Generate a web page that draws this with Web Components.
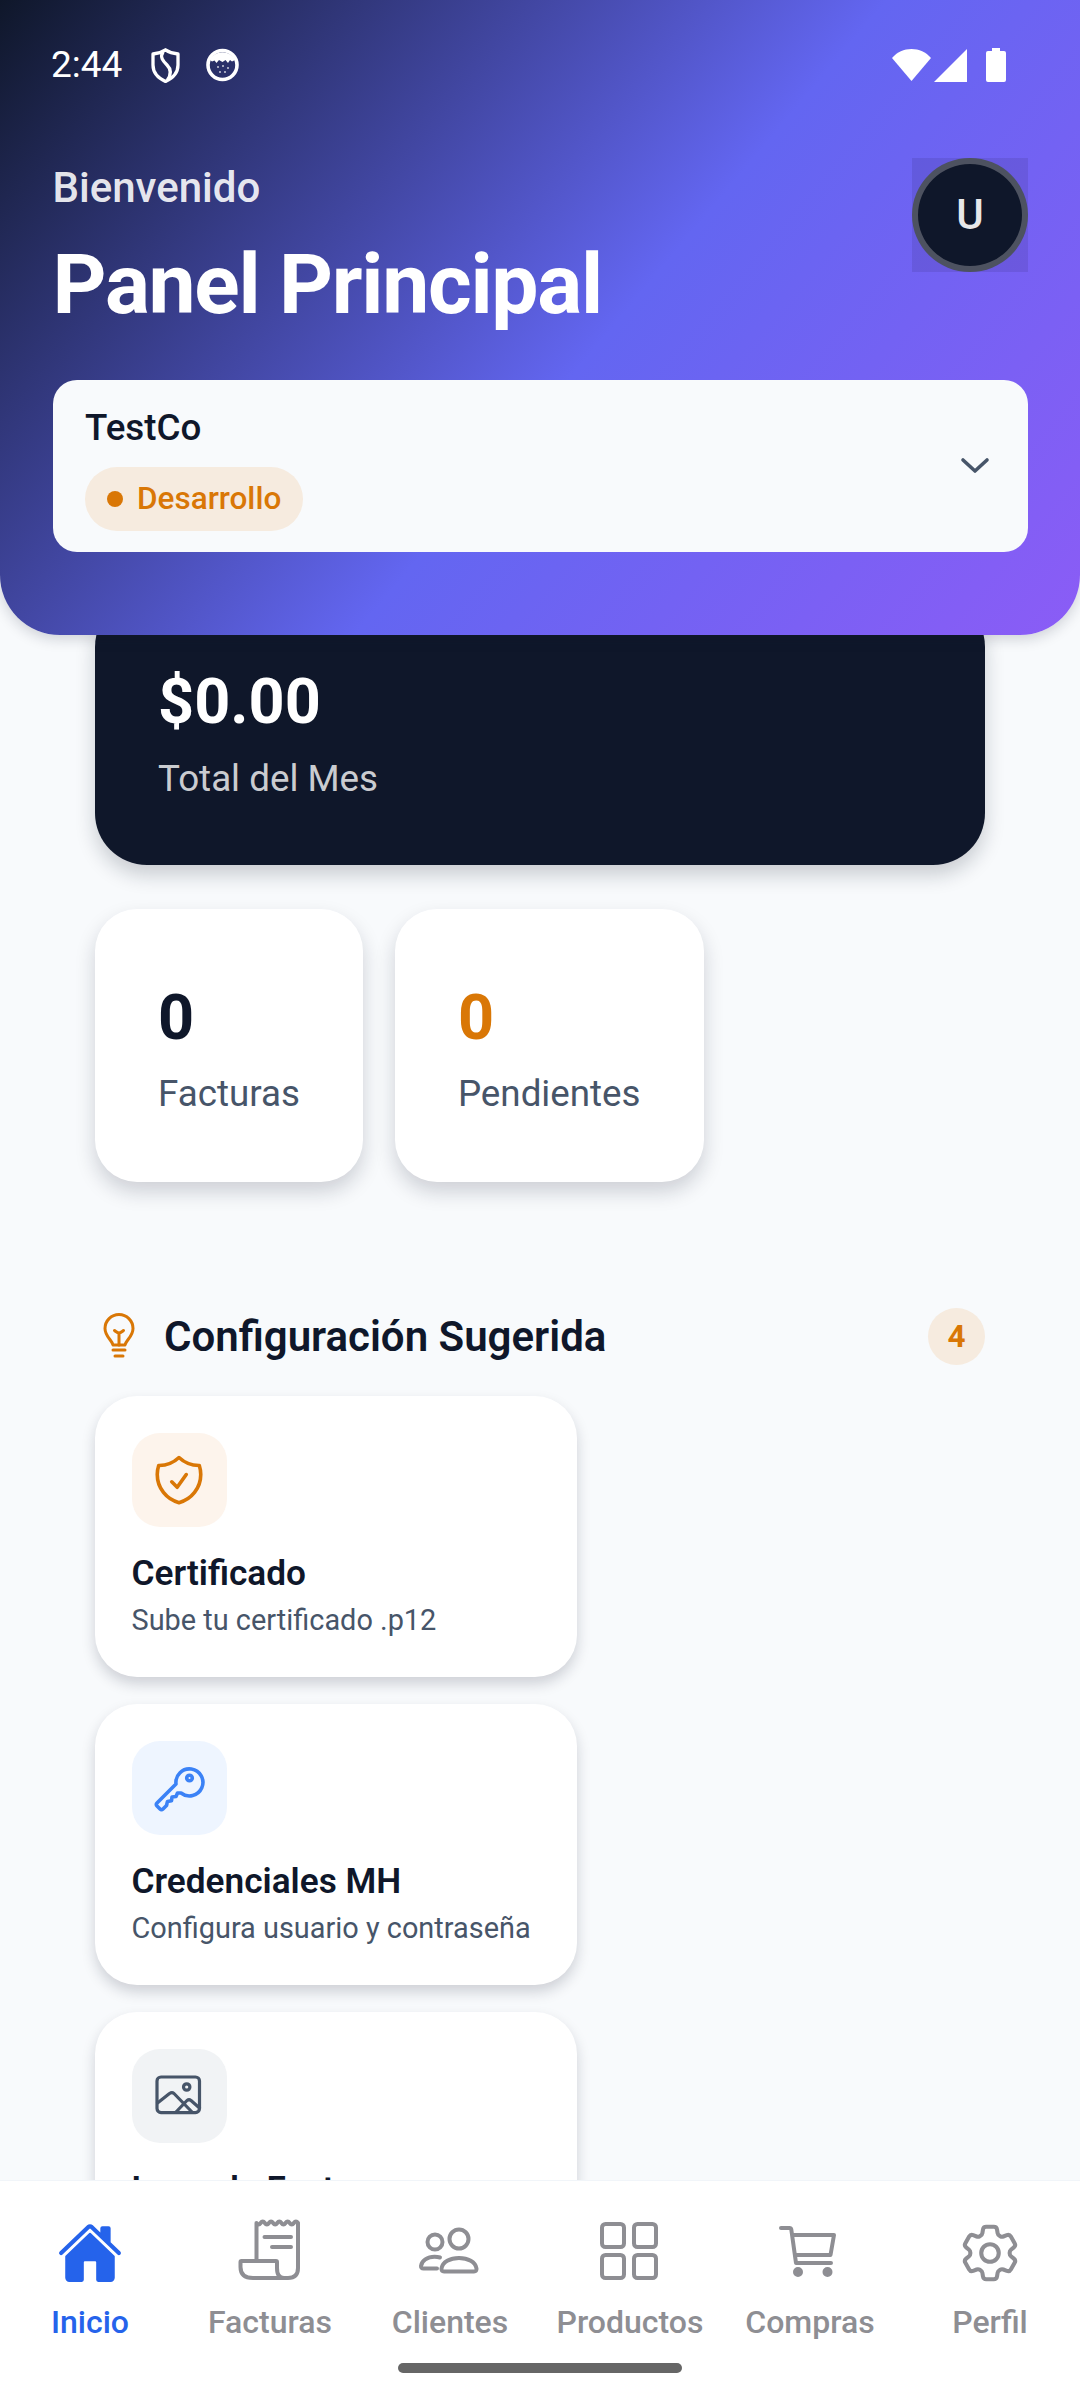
<!DOCTYPE html>
<html lang="es">
<head>
<meta charset="utf-8">
<title>Panel Principal</title>
<style>
    html, body { margin: 0; padding: 0; background: #f8fafc; }
    body { font-family: Roboto, "Noto Sans", sans-serif; }
    svg { display: block; }
</style>
</head>
<body>
<app-shell>
    <app-header slot="header" title="Panel Principal" greeting="Bienvenido" initial="U">
        <company-select name="TestCo" env="Desarrollo"></company-select>
    </app-header>

    <hero-card amount="$0.00" caption="Total del Mes"></hero-card>

    <div class="stats" style="display:flex;gap:32px;margin-top:44px">
        <stat-card value="0" label="Facturas"></stat-card>
        <stat-card value="0" label="Pendientes" accent></stat-card>
    </div>

    <section-head count="4">Configuración Sugerida</section-head>

    <div style="display:flex;flex-direction:column;gap:27px;margin-top:31px">
        <config-card heading="Certificado" text="Sube tu certificado .p12" bg="#fdf4ec" color="#d97706">
            <svg width="58" height="58" viewBox="0 0 24 24" fill="none" stroke="#d97706" stroke-width="1.5" stroke-linecap="round" stroke-linejoin="round"><path d="M9 12.75 11.25 15 15 9.75m-3-7.036A11.959 11.959 0 0 1 3.598 6 11.99 11.99 0 0 0 3 9.749c0 5.592 3.824 10.29 9 11.623 5.176-1.332 9-6.03 9-11.622 0-1.31-.21-2.571-.598-3.751h-.152c-3.196 0-6.1-1.248-8.25-3.285Z"/></svg>
        </config-card>
        <config-card heading="Credenciales MH" text="Configura usuario y contraseña" bg="#eef5ff">
            <svg width="58" height="58" viewBox="0 0 58 58" fill="none" stroke="#3b82f6" stroke-width="3.6" stroke-linecap="round" stroke-linejoin="round"><path d="M26 25 7 44q-1.500 1.500 0 3l3 3q1.500 1.500 3 0l3.500-3.500 1-4 4-.8.500-3.700 4-.5 1.500-3.500h3.500A13.500 13.500 0 1 0 26 25Z"/><circle cx="39.500" cy="19" r="2.800"/></svg>
        </config-card>
        <config-card heading="Logo de Factura" text="Sube el logo de tu empresa" bg="#f1f3f5">
            <svg width="58" height="58" viewBox="0 0 58 58" fill="none" stroke="#475569" stroke-width="3.2" stroke-linecap="round" stroke-linejoin="round"><rect x="7" y="10" width="42.500" height="35.600" rx="4"/><path d="M7.500 36 19.500 26.500q2.500-1.500 4.500 0L42 45M26 45 37 33.500q2-1.500 4 0L49.500 41"/><circle cx="36.700" cy="20" r="3.200"/></svg>
        </config-card>
    </div>

    <bottom-nav slot="nav"></bottom-nav>
</app-shell>

<script>
class AppShell extends HTMLElement
{
    constructor()
    {
        super();
        this.attachShadow({mode: "open"});
        this.shadowRoot.innerHTML = `
        <style>
            :host{
                display: flex;
                flex-direction: column;
                width: 1080px;
                height: 2400px;
                overflow: hidden;
                background: #f8fafc;
                color: #0f172a;
                font-family: Roboto, "Noto Sans", sans-serif;
            }
            .scroll{
                flex: 1;
                min-height: 0;
                overflow: hidden;
                padding: 0 95px;
            }
        </style>
        <slot name="header"></slot>
        <main class="scroll"><slot></slot></main>
        <slot name="nav"></slot>
        `;
    }
}

class StatusBar extends HTMLElement
{
    constructor()
    {
        super();
        this.attachShadow({mode: "open"});
        this.shadowRoot.innerHTML = `
        <style>
            :host{
                display: flex;
                align-items: center;
                height: 36px;
                color: #fff;
            }
            .time{
                font: 400 37px/36px Roboto, sans-serif;
                width: 74px;
            }
            .left{ display: flex; align-items: center; gap: 26px; flex: 1; }
            .right{ display: flex; align-items: center; gap: 3px; padding-right: 22px; }
            .batt{ margin-left: 16px; }
        </style>
        <div class="left">
            <span class="time">2:44</span>
            <svg width="29" height="35" viewBox="0 0 29 35" fill="none" stroke="#fff" stroke-width="3.300" stroke-linejoin="round"><path d="M14.500 1.800C10.500 4.500 6.500 5.500 2 6V17C2 25 8 30.500 14.500 33.500 21 30.500 27 25 27 17V6C22.500 5.500 18.500 4.500 14.500 1.800Z"/><path d="M12 4C8.500 9 12 13 16 17 20 21 20.500 26 16.500 32"/></svg>
            <svg width="33" height="34" viewBox="0 0 33 34"><circle cx="16.500" cy="17" r="14.500" fill="none" stroke="#fff" stroke-width="3.600"/><path d="M4 12A14 14 0 0 1 29 12L26 13.500 24 12 22 15 19.500 12 16.500 14 13 12 10.500 15 8.500 12.500 6 13.500Z" fill="#fff"/><g fill="#fff" opacity=".75"><circle cx="12" cy="19" r="1"/><circle cx="17" cy="18" r="1"/><circle cx="22" cy="20" r="1"/><circle cx="14" cy="24" r="1"/><circle cx="19" cy="24" r="1"/></g></svg>
        </div>
        <div class="right">
            <svg width="39" height="32" viewBox="0 0 39 32" fill="#fff"><path d="M0 9C5 3 12 0 19.500 0 27 0 34 3 39 9L19.500 32Z"/></svg>
            <svg width="33" height="33" viewBox="0 0 33 33" fill="#fff"><path d="M33 0V33H0Z"/></svg>
            <svg class="batt" width="20" height="34" viewBox="0 0 20 34" fill="#fff"><path d="M6 0h8v3h4q2 0 2 2v27q0 2-2 2H2q-2 0-2-2V5q0-2 2-2h4Z"/></svg>
        </div>
        `;
    }
}

class AppHeader extends HTMLElement
{
    constructor()
    {
        super();
        this.attachShadow({mode: "open"});
    }

    connectedCallback()
    {
        const title = this.getAttribute("title");
        const greeting = this.getAttribute("greeting");
        const initial = this.getAttribute("initial");
        this.shadowRoot.innerHTML = `
        <style>
            :host{
                display: block;
                position: relative;
                z-index: 2;
                box-sizing: border-box;
                height: 635px;
                flex: none;
                padding: 47px 52px 0 51px;
                border-radius: 0 0 60px 60px;
                background: linear-gradient(130deg, #0f172a 0%, #6366f1 55%, #8b5cf6 100%);
                box-shadow: 0 4px 14px rgba(15,23,42,.18);
            }
            .top{
                display: flex;
                justify-content: space-between;
                align-items: flex-start;
                margin: 75px 0 0 1.500px;
            }
            .greet{
                font: 500 42px/44px Roboto, sans-serif;
                color: rgba(255,255,255,.9);
                margin-top: 8px;
            }
            h1{
                margin: 27px 0 0;
                font: 700 84px/96px Roboto, sans-serif;
                letter-spacing: -1.300px;
                color: #fff;
            }
            .avatar-box{
                width: 116px;
                height: 114px;
                background: rgba(30,27,75,.12);
                flex: none;
            }
            .avatar{
                box-sizing: border-box;
                width: 100%;
                height: 100%;
                border-radius: 50%;
                border: 6px solid #4d5260;
                background: #0f172a;
                color: #e8e8ea;
                font: 500 42px/102px Roboto, sans-serif;
                text-align: center;
            }
            ::slotted(company-select){
                margin: 47px 0 0 2px;
            }
        </style>
        <status-bar></status-bar>
        <div class="top">
            <div>
                <div class="greet">${greeting}</div>
                <h1>${title}</h1>
            </div>
            <div class="avatar-box"><div class="avatar">${initial}</div></div>
        </div>
        <slot></slot>
        `;
    }
}

class CompanySelect extends HTMLElement
{
    constructor()
    {
        super();
        this.attachShadow({mode: "open"});
    }

    connectedCallback()
    {
        this.shadowRoot.innerHTML = `
        <style>
            :host{
                display: flex;
                align-items: center;
                justify-content: space-between;
                box-sizing: border-box;
                width: 975px;
                height: 172px;
                padding: 27px 38px 21px 32px;
                border-radius: 24px;
                background: #f8fafc;
            }
            .name{
                font: 500 36.750px/42px Roboto, sans-serif;
                color: #0f172a;
            }
            .chip{
                display: inline-flex;
                align-items: center;
                gap: 14px;
                height: 64px;
                margin-top: 18px;
                padding: 0 22px;
                border-radius: 32px;
                background: #f6ebdf;
                color: #d97706;
                font: 500 31.500px/64px Roboto, sans-serif;
            }
            .dot{ width: 16px; height: 16px; border-radius: 50%; background: #d97706; }
            svg{ margin-bottom: 7px; }
        </style>
        <div>
            <div class="name">${this.getAttribute("name")}</div>
            <div class="chip"><span class="dot"></span>${this.getAttribute("env")}</div>
        </div>
        <svg width="30" height="20" viewBox="0 0 30 20" fill="none" stroke="#475569" stroke-width="3.600" stroke-linecap="round" stroke-linejoin="round"><path d="M3 4 15 15 27 4"/></svg>
        `;
    }
}

class HeroCard extends HTMLElement
{
    constructor()
    {
        super();
        this.attachShadow({mode: "open"});
    }

    connectedCallback()
    {
        this.shadowRoot.innerHTML = `
        <style>
            :host{
                display: block;
                box-sizing: border-box;
                height: 270px;
                margin-top: -40px;
                padding: 69.500px 63px 0;
                border-radius: 52px;
                background: #0f172a;
                color: #fff;
                box-shadow: 0 10px 20px rgba(15,23,42,.2);
            }
            .amount{ font: 700 63px/74px Roboto, sans-serif; }
            .cap{
                margin-top: 20px;
                font: 400 36.750px/40px Roboto, sans-serif;
                color: rgba(255,255,255,.8);
            }
        </style>
        <div class="amount">${this.getAttribute("amount")}</div>
        <div class="cap">${this.getAttribute("caption")}</div>
        `;
    }
}

class StatCard extends HTMLElement
{
    constructor()
    {
        super();
        this.attachShadow({mode: "open"});
    }

    connectedCallback()
    {
        this.shadowRoot.innerHTML = `
        <style>
            :host{
                display: block;
                box-sizing: border-box;
                height: 273px;
                padding: 71.500px 63px 0;
                border-radius: 42px;
                background: #fff;
                box-shadow: 0 10px 20px rgba(15,23,42,.18);
            }
            .val{ font: 700 63px/74px Roboto, sans-serif; color: #0f172a; }
            :host([accent]) .val{ color: #d97706; }
            .lab{
                margin-top: 17px;
                font: 400 36.750px/44px Roboto, sans-serif;
                color: #475569;
            }
        </style>
        <div class="val">${this.getAttribute("value")}</div>
        <div class="lab">${this.getAttribute("label")}</div>
        `;
    }
}

class SectionHead extends HTMLElement
{
    constructor()
    {
        super();
        this.attachShadow({mode: "open"});
    }

    connectedCallback()
    {
        this.shadowRoot.innerHTML = `
        <style>
            :host{
                display: flex;
                align-items: center;
                height: 57px;
                margin-top: 126px;
            }
            svg{ margin-right: 21px; }
            .title{
                flex: 1;
                font: 600 42px/57px Roboto, sans-serif;
                color: #0f172a;
            }
            .count{
                width: 57px;
                height: 57px;
                border-radius: 50%;
                background: #f6ebdf;
                color: #d97706;
                text-align: center;
                font: 700 31.500px/57px Roboto, sans-serif;
            }
        </style>
        <svg width="48" height="48" viewBox="0 0 48 48" fill="none" stroke="#d97706" stroke-width="3" stroke-linecap="round" stroke-linejoin="round"><path d="M18 32C17 27 10 23.500 10 15.500A14 14 0 0 1 38 15.500C38 23.500 31 27 30 32Z"/><path d="M24 32V20M19.500 17.500c2 1.500 3 2.500 4.500 2.500s2.500-1 4.500-2.500M18 37H30M20 43H28" /></svg>
        <div class="title"><slot></slot></div>
        <div class="count">${this.getAttribute("count")}</div>
        `;
    }
}

class ConfigCard extends HTMLElement
{
    constructor()
    {
        super();
        this.attachShadow({mode: "open"});
    }

    connectedCallback()
    {
        this.shadowRoot.innerHTML = `
        <style>
            :host{
                display: block;
                box-sizing: border-box;
                width: 482px;
                height: 281px;
                padding: 37px 36.500px;
                border-radius: 42px;
                background: #fff;
                box-shadow: 0 7px 14px rgba(15,23,42,.18);
            }
            .ico{
                display: flex;
                align-items: center;
                justify-content: center;
                width: 95px;
                height: 94px;
                border-radius: 28px;
                background: ${this.getAttribute("bg")};
            }
            .h{
                margin-top: 24px;
                font: 600 35.200px/44px Roboto, sans-serif;
                color: #0f172a;
                white-space: nowrap;
            }
            .t{
                margin-top: 5px;
                font: 400 28.900px/40px Roboto, sans-serif;
                color: #475569;
                white-space: nowrap;
            }
        </style>
        <div class="ico"><slot></slot></div>
        <div class="h">${this.getAttribute("heading")}</div>
        <div class="t">${this.getAttribute("text")}</div>
        `;
    }
}

const NAV_ITEMS = [
    {label: "Inicio", active: true, icon: `<svg width="66" height="66" viewBox="0 0 512 512" fill="#2563eb"><path d="M261.560 101.280a8 8 0 00-11.060 0L66.400 277.150a8 8 0 00-2.470 5.790L63.900 448a32 32 0 0032 32H192a16 16 0 0016-16V328a8 8 0 018-8h80a8 8 0 018 8v136a16 16 0 0016 16h96.060a32 32 0 0032-32V282.940a8 8 0 00-2.470-5.790z"/><path d="M490.910 244.150l-74.800-71.560V64a16 16 0 00-16-16h-48a16 16 0 00-16 16v32l-57.920-55.380C272.770 35.140 264.710 32 256 32c-8.680 0-16.720 3.140-22.140 8.630l-212.700 203.500c-6.220 6-7 15.870-1.340 22.370A16 16 0 0043 267.560L250.500 69.280a8 8 0 0111.060 0l207.520 198.280a16 16 0 0022.590-.44c6.140-6.360 5.630-16.860-.76-22.970z"/></svg>`},
    {label: "Facturas", icon: `<svg width="72" height="72" viewBox="0 0 72 72" fill="none" stroke="currentColor" stroke-width="4" stroke-linecap="round" stroke-linejoin="round"><path d="M22.500 43V6q2.075 3 4.150 0t4.150 0 4.150 0 4.150 0 4.150 0 4.150 0 4.150 0 4.150 0 4.150 0 4.150 0V51q0 10-10 10H19Q6.500 61 6.500 50V45q0-1 1-1H42q1 0 1 1v6q0 10 7 10"/><path d="M30.500 20H57M38 30H57"/></svg>`},
    {label: "Clientes", icon: `<svg width="72" height="72" viewBox="0 0 72 72" fill="none" stroke="currentColor" stroke-width="4" stroke-linecap="round" stroke-linejoin="round"><circle cx="21" cy="25" r="7.500"/><circle cx="45" cy="22" r="9.500"/><path d="M27.500 51.500C28.500 45 36 41 45 41s16.500 4 17.500 10.500q.3 3-2.500 3H30q-2.800 0-2.500-3Z"/><path d="M26 40.500q-2.500-.8-5.500-.8C13.500 39.700 7.500 44 7 49q-.2 2.500 2.500 2.500H23"/></svg>`},
    {label: "Productos", icon: `<svg width="72" height="72" viewBox="0 0 72 72" fill="none" stroke="currentColor" stroke-width="4" stroke-linecap="round" stroke-linejoin="round"><rect x="8" y="7" width="22" height="23" rx="3.500"/><rect x="40" y="7" width="22" height="23" rx="3.500"/><rect x="8" y="38" width="22" height="23" rx="3.500"/><rect x="40" y="38" width="22" height="23" rx="3.500"/></svg>`},
    {label: "Compras", icon: `<svg width="72" height="72" viewBox="0 0 72 72" fill="none" stroke="currentColor" stroke-width="4" stroke-linecap="round" stroke-linejoin="round"><path d="M7 11H15.500q1.500 0 1.800 1.500L22 46H57M18.500 18H60L56.500 38H21"/><circle cx="24" cy="55" r="3" fill="currentColor"/><circle cx="53.500" cy="55" r="3" fill="currentColor"/></svg>`},
    {label: "Perfil", icon: `<svg width="70" height="70" viewBox="0 0 24 24" fill="none" stroke="currentColor" stroke-width="1.400" stroke-linecap="round" stroke-linejoin="round"><path d="M9.594 3.940c.090-.542.560-.940 1.110-.940h2.593c.550 0 1.020.398 1.110.940l.213 1.281c.063.374.313.686.645.870.074.040.147.083.220.127.325.196.720.257 1.075.124l1.217-.456a1.125 1.125 0 0 1 1.370.490l1.296 2.247a1.125 1.125 0 0 1-.260 1.431l-1.003.827c-.293.241-.438.613-.430.992a7.723 7.723 0 0 1 0 .255c-.008.378.137.750.430.991l1.004.827c.424.350.534.955.260 1.430l-1.298 2.247a1.125 1.125 0 0 1-1.369.491l-1.217-.456c-.355-.133-.750-.072-1.076.124a6.470 6.470 0 0 1-.220.128c-.331.183-.581.495-.644.869l-.213 1.281c-.090.543-.560.940-1.110.940h-2.594c-.550 0-1.019-.398-1.110-.940l-.213-1.281c-.062-.374-.312-.686-.644-.870a6.520 6.520 0 0 1-.220-.127c-.325-.196-.720-.257-1.076-.124l-1.217.456a1.125 1.125 0 0 1-1.369-.490l-1.297-2.247a1.125 1.125 0 0 1 .260-1.431l1.004-.827c.292-.240.437-.613.430-.991a6.932 6.932 0 0 1 0-.255c.007-.380-.138-.751-.430-.992l-1.004-.827a1.125 1.125 0 0 1-.260-1.430l1.297-2.247a1.125 1.125 0 0 1 1.370-.491l1.216.456c.356.133.751.072 1.076-.124.072-.044.146-.086.220-.128.332-.183.582-.495.644-.869l.214-1.280Z"/><path d="M15 12a3 3 0 1 1-6 0 3 3 0 0 1 6 0Z"/></svg>`}
];

class BottomNav extends HTMLElement
{
    constructor()
    {
        super();
        this.attachShadow({mode: "open"});
    }

    connectedCallback()
    {
        const items = NAV_ITEMS.map(item => `
            <div class="item${item.active ? " on" : ""}">
                <div class="ic">${item.icon}</div>
                <span>${item.label}</span>
            </div>`).join("");
        this.shadowRoot.innerHTML = `
        <style>
            :host{
                display: block;
                position: relative;
                z-index: 1;
                flex: none;
                box-sizing: border-box;
                height: 220px;
                padding-top: 36px;
                background: #fff;
                border-top: 1px solid #f1f5f9;
            }
            .row{ display: grid; grid-template-columns: repeat(6, 180px); }
            .item{
                display: flex;
                flex-direction: column;
                align-items: center;
                color: #8e8e93;
                font: 500 32px/40px Roboto, sans-serif;
            }
            .item.on{ color: #2563eb; }
            .ic{
                display: flex;
                align-items: center;
                justify-content: center;
                width: 72px;
                height: 72px;
                margin-bottom: 12.500px;
            }
            .pill{
                width: 284px;
                height: 10px;
                margin: 21.500px auto 0;
                border-radius: 5px;
                background: #666;
            }
        </style>
        <div class="row">${items}</div>
        <div class="pill"></div>
        `;
    }
}

customElements.define("app-shell", AppShell);
customElements.define("status-bar", StatusBar);
customElements.define("app-header", AppHeader);
customElements.define("company-select", CompanySelect);
customElements.define("hero-card", HeroCard);
customElements.define("stat-card", StatCard);
customElements.define("section-head", SectionHead);
customElements.define("config-card", ConfigCard);
customElements.define("bottom-nav", BottomNav);
</script>
</body>
</html>
